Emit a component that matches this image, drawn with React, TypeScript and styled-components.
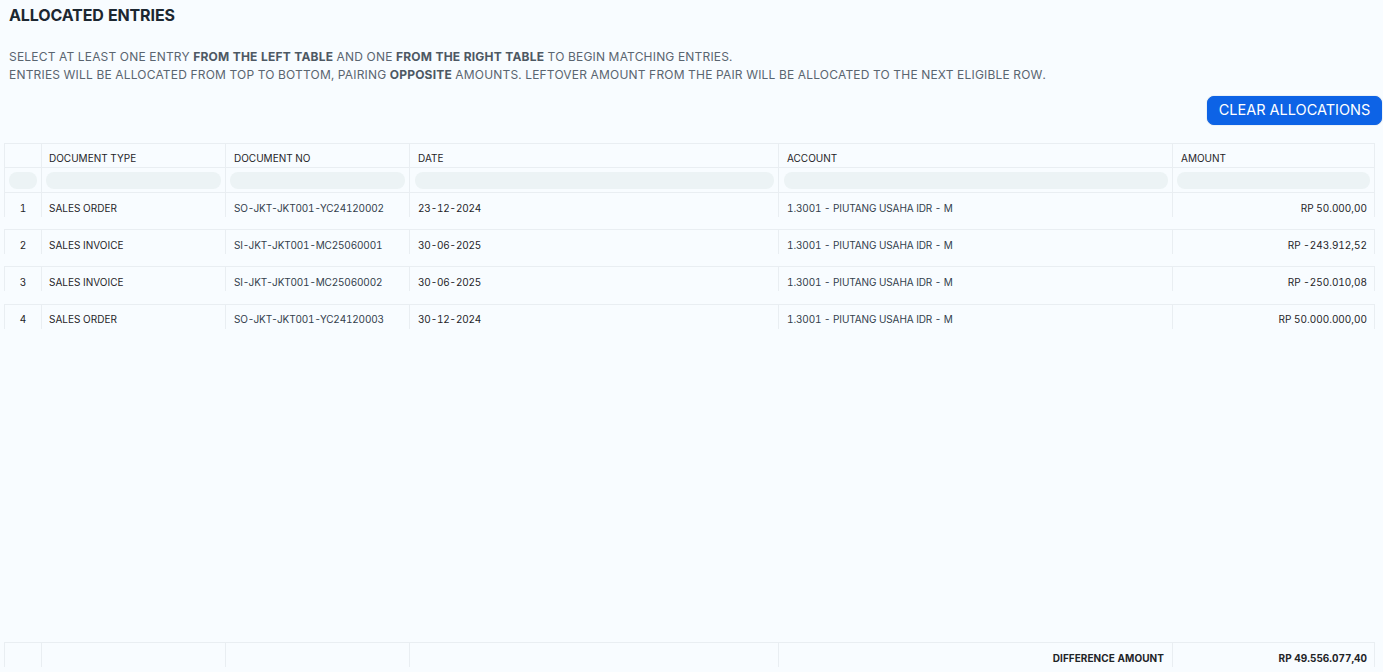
import React from 'react';
import styled, { createGlobalStyle } from 'styled-components';

const GlobalStyle = createGlobalStyle`
  html, body {
    margin: 0;
    padding: 0;
    background: #f8fcff;
  }
  body {
    font-family: Inter, "Liberation Sans", sans-serif;
    font-feature-settings: 'tnum', 'case';
    overflow: hidden;
  }
`;

const COLUMNS = '37px 184px 184px 369px 394px 203px';
const LINE = '#e9eef2';

const entries = [
  { no: 1, type: 'SALES ORDER', doc: 'SO-JKT-JKT001-YC24120002', date: '23-12-2024', amount: 'RP 50.000,00', gap: 12 },
  { no: 2, type: 'SALES INVOICE', doc: 'SI-JKT-JKT001-MC25060001', date: '30-06-2025', amount: 'RP -243.912,52', gap: 12 },
  { no: 3, type: 'SALES INVOICE', doc: 'SI-JKT-JKT001-MC25060002', date: '30-06-2025', amount: 'RP -250.010,08', gap: 12.5 },
  { no: 4, type: 'SALES ORDER', doc: 'SO-JKT-JKT001-YC24120003', date: '30-12-2024', amount: 'RP 50.000.000,00', gap: 0 },
];

const Page = styled.div`
  width: 1383px;
  height: 672px;
  display: flex;
  flex-direction: column;
  overflow: hidden;
`;

const Intro = styled.div`
  padding: 6px 0 0 9px;
`;

const Title = styled.h1`
  margin: 0;
  font-size: 16px;
  line-height: 18px;
  font-weight: 700;
  letter-spacing: -0.12px;
  color: #1c2731;
`;

const Description = styled.p`
  margin: 24px 0 0;
  font-size: 12px;
  line-height: 18px;
  letter-spacing: 0.19px;
  color: #5a6570;

  b {
    font-weight: 700;
    color: #4d5863;
  }
`;

const Actions = styled.div`
  display: flex;
  justify-content: flex-end;
  margin-top: 12px;
`;

const ClearButton = styled.button`
  width: 175px;
  height: 29px;
  margin-right: 1px;
  padding: 0 0 2px;
  border: 1px solid #0d63e6;
  border-radius: 7px;
  background: #0d63e6;
  color: #ffffff;
  font-family: inherit;
  font-size: 14.5px;
  line-height: 23px;
  box-shadow: 0 0 1px rgba(13, 60, 130, 0.5);
`;

const Grid = styled.div`
  margin: 18px 0 0 4px;
  width: 1371px;
  flex: 1;
  display: flex;
  flex-direction: column;
`;

const Row = styled.div<{ $gap?: number }>`
  display: grid;
  grid-template-columns: ${COLUMNS};
  border-top: 1px solid ${LINE};
  margin-bottom: ${(p) => p.$gap ?? 0}px;
`;

const HeaderCell = styled.div`
  height: 16px;
  padding: 7px 8px 0;
  box-sizing: content-box;
  font-size: 10px;
  line-height: 14px;
  font-weight: 400;
  color: #1f2428;
  border-left: 1px solid ${LINE};
  &:nth-child(2) {
    padding-left: 7px;
  }
  &:last-child {
    border-right: 1px solid ${LINE};
  }
`;

const FilterCell = styled.div`
  height: 24px;
  padding: 4px 4px 3px;
  box-sizing: border-box;
  border-left: 1px solid ${LINE};
  &:nth-child(4),
  &:nth-child(5) {
    padding-left: 5px;
  }
  &:last-child {
    border-right: 1px solid ${LINE};
  }
`;

const FilterInput = styled.div`
  height: 17px;
  border-radius: 8px;
  background: #ecf3f5;
`;

const Cell = styled.div<{ $align?: string; $bold?: boolean; $faded?: boolean; $tight?: number }>`
  height: 24px;
  padding: 7.6px 8px 0;
  box-sizing: border-box;
  font-size: 10px;
  line-height: 14px;
  white-space: nowrap;
  overflow: hidden;
  letter-spacing: ${(p) => p.$tight ?? 0}px;
  text-align: ${(p) => p.$align ?? 'left'};
  font-weight: ${(p) => (p.$bold ? 700 : 400)};
  color: ${(p) => (p.$faded ? '#33404c' : '#1f2428')};
  border-left: 1px solid ${LINE};
  &:nth-child(2) {
    padding-left: 7px;
  }
  &:last-child {
    padding-right: 7px;
    border-right: 1px solid ${LINE};
  }
`;

const FooterRow = styled(Row)`
  margin-top: auto;
  margin-bottom: 5px;
`;

const App: React.FC = () => {
  return (
    <Page>
      <GlobalStyle />
      <Intro>
        <Title>ALLOCATED ENTRIES</Title>
        <Description>
          SELECT AT LEAST ONE ENTRY <b>FROM THE LEFT TABLE</b> AND ONE <b>FROM THE RIGHT TABLE</b> TO BEGIN MATCHING ENTRIES.
          <br />
          ENTRIES WILL BE ALLOCATED FROM TOP TO BOTTOM, PAIRING <b>OPPOSITE</b> AMOUNTS. LEFTOVER AMOUNT FROM THE PAIR WILL BE ALLOCATED TO THE NEXT ELIGIBLE ROW.
        </Description>
      </Intro>
      <Actions>
        <ClearButton>CLEAR ALLOCATIONS</ClearButton>
      </Actions>
      <Grid>
        <Row>
          <HeaderCell />
          <HeaderCell>DOCUMENT TYPE</HeaderCell>
          <HeaderCell>DOCUMENT NO</HeaderCell>
          <HeaderCell>DATE</HeaderCell>
          <HeaderCell>ACCOUNT</HeaderCell>
          <HeaderCell>AMOUNT</HeaderCell>
        </Row>
        <Row>
          {[0, 1, 2, 3, 4, 5].map((i) => (
            <FilterCell key={i}>
              <FilterInput />
            </FilterCell>
          ))}
        </Row>
        {entries.map((entry) => (
          <Row key={entry.no} $gap={entry.gap}>
            <Cell $align="center">{entry.no}</Cell>
            <Cell>{entry.type}</Cell>
            <Cell $faded $tight={-0.17}>{entry.doc}</Cell>
            <Cell $tight={-0.17}>{entry.date}</Cell>
            <Cell $faded $tight={-0.1}>1.3001 - PIUTANG USAHA IDR - M</Cell>
            <Cell $align="right">{entry.amount}</Cell>
          </Row>
        ))}
        <FooterRow>
          <Cell />
          <Cell />
          <Cell />
          <Cell />
          <Cell $align="right" $bold $tight={0.05}>DIFFERENCE AMOUNT</Cell>
          <Cell $align="right" $bold>RP 49.556.077,40</Cell>
        </FooterRow>
      </Grid>
    </Page>
  );
};

export default App;
